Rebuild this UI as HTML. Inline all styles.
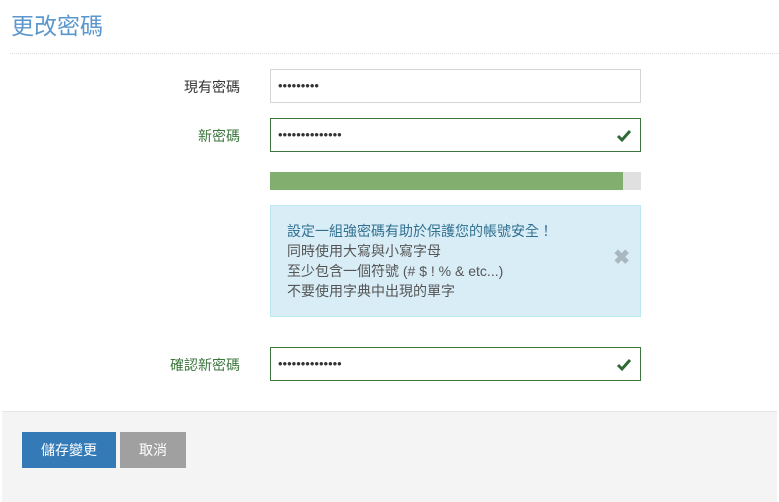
<!DOCTYPE html>
<html><head><meta charset="utf-8"><style>
body{margin:0;width:779px;height:493px;background:#fff;font-family:"Liberation Sans","Noto Sans CJK TC",sans-serif;position:relative;overflow:hidden}
.a{position:absolute}
h1{position:absolute;left:11px;top:7px;margin:0;font-size:23px;font-weight:normal;color:#5b97cc}
.hr{left:10px;top:53px;width:769px;border-top:1px dotted #ddd}
.lbl{right:539px;font-size:14px;color:#333;text-align:right}
.in{left:270px;width:369px;height:32px;border:1px solid #d5d5d5;background:#fff}
.ok{border-color:#3c763d}
.dots{position:absolute;left:7px;top:8px;font-size:13px;color:#333}
.chk{position:absolute;right:8px;top:8px}
</style></head><body>
<h1>更改密碼</h1>
<div class="a hr"></div>
<div class="a lbl" style="top:77px">現有密碼</div>
<div class="a in" style="top:69px"><span class="dots">•••••••••</span></div>
<div class="a lbl" style="top:126px;color:#3c763d">新密碼</div>
<div class="a in ok" style="top:118px"><span class="dots">••••••••••••••</span><svg class="chk" width="16" height="16" viewBox="0 0 16 16"><path d="M2 9l4 4 8-9" stroke="#2f6a36" stroke-width="3" fill="none"/></svg></div>
<div class="a" style="left:270px;top:172px;width:371px;height:18px;background:#e0e0e0"><div style="width:353px;height:18px;background:#82af6f"></div></div>
<div class="a" style="left:270px;top:205px;width:369px;height:110px;background:#d9edf7;border:1px solid #bce8f1;color:#555;font-size:14px;line-height:20px">
<div style="position:absolute;left:16px;top:15px"><span style="color:#31708f">設定一組強密碼有助於保護您的帳號安全！</span><br>同時使用大寫與小寫字母<br>至少包含一個符號 (# $ ! % &amp; etc...)<br>不要使用字典中出現的單字</div>
<div style="position:absolute;right:10px;top:42px;font-size:20px;font-weight:bold;color:#a9b7bf">✖</div>
</div>
<div class="a lbl" style="top:355px;color:#3c763d">確認新密碼</div>
<div class="a in ok" style="top:347px"><span class="dots">••••••••••••••</span><svg class="chk" width="16" height="16" viewBox="0 0 16 16"><path d="M2 9l4 4 8-9" stroke="#2f6a36" stroke-width="3" fill="none"/></svg></div>
<div class="a" style="left:2px;top:411px;width:775px;height:90px;background:#f4f4f4;border-top:1px solid #e5e5e5"></div>
<div class="a" style="left:22px;top:432px;width:94px;height:36px;background:#337ab7;color:#fff;font-size:14px;line-height:36px;text-align:center">儲存變更</div>
<div class="a" style="left:120px;top:432px;width:66px;height:36px;background:#a0a0a0;color:#fff;font-size:14px;line-height:36px;text-align:center">取消</div>
</body></html>
